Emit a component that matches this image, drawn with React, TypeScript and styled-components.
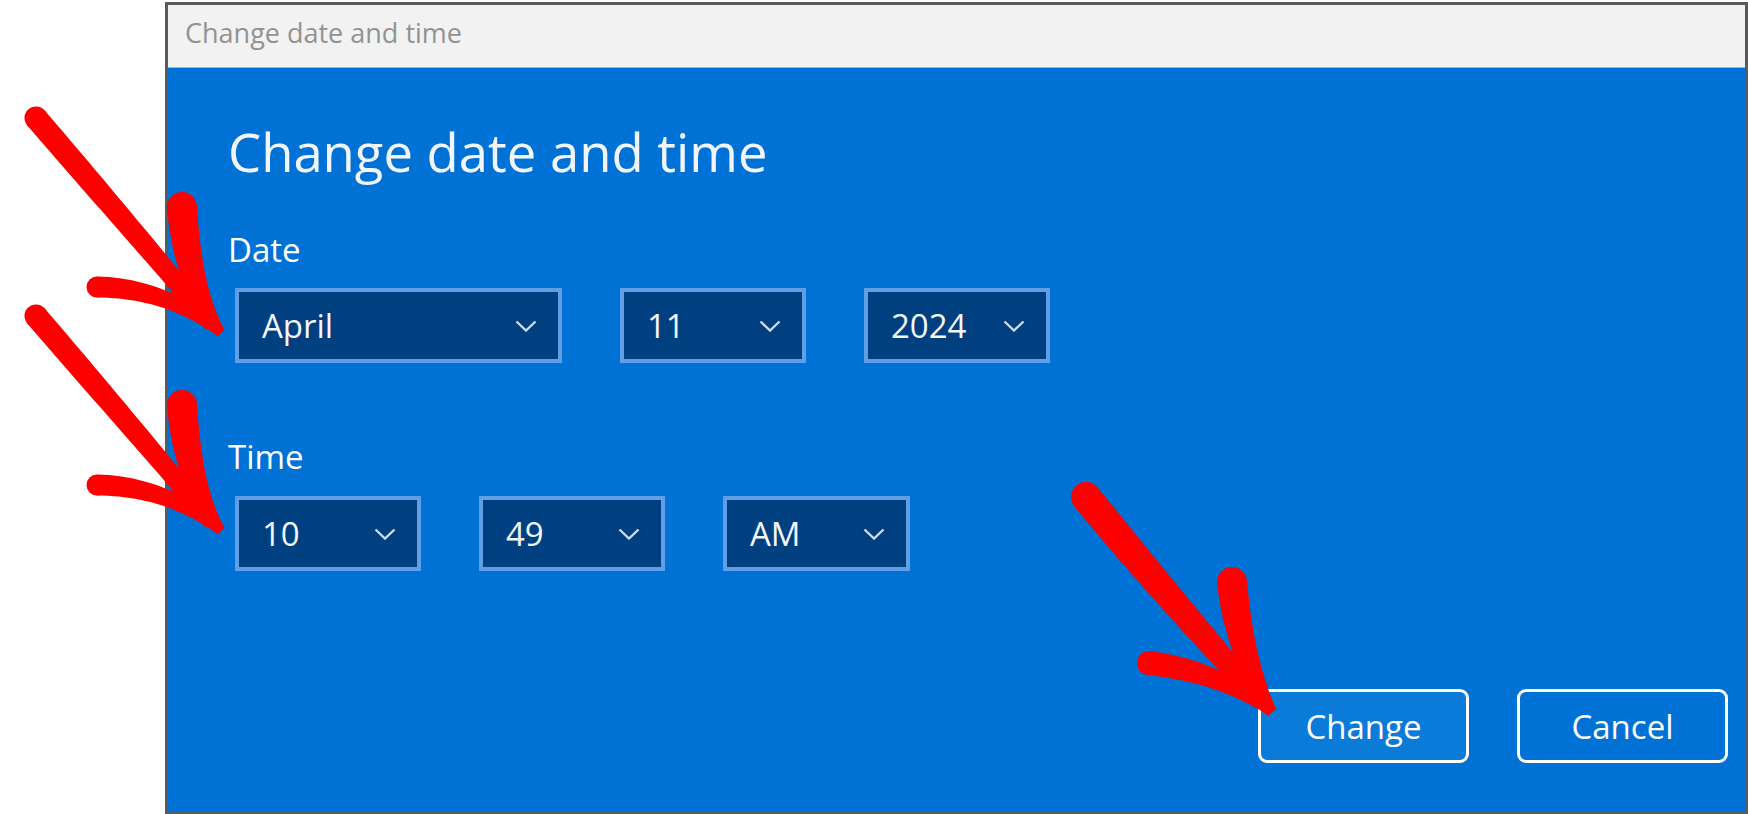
import React from "react";
import styled, { createGlobalStyle } from "styled-components";

type Pt = [number, number];
type Stroke = [Pt, Pt, Pt, number, number];

const GlobalStyle = createGlobalStyle`
  body {
    margin: 0;
    background: #ffffff;
    font-family: "Open Sans", "Noto Sans", sans-serif;
    overflow: hidden;
  }
`;

// sample a quadratic curve and turn it into a tapered brush stroke
const brush = (p0: Pt, p1: Pt, p2: Pt, w0: number, w1: number) => {
  const n = 24;
  const pts: Pt[] = [];
  for (let i = 0; i <= n; i++) {
    const t = i / n;
    const a = (1 - t) * (1 - t);
    const b = 2 * (1 - t) * t;
    const c = t * t;
    pts.push([a * p0[0] + b * p1[0] + c * p2[0], a * p0[1] + b * p1[1] + c * p2[1]]);
  }
  const left: Pt[] = [];
  const right: Pt[] = [];
  pts.forEach((p, i) => {
    const prev = pts[Math.max(0, i - 1)];
    const next = pts[Math.min(n, i + 1)];
    const dx = next[0] - prev[0];
    const dy = next[1] - prev[1];
    const len = Math.hypot(dx, dy) || 1;
    const w = (w0 + (w1 - w0) * Math.pow(i / n, 1.6)) / 2;
    left.push([p[0] - (dy / len) * w, p[1] + (dx / len) * w]);
    right.push([p[0] + (dy / len) * w, p[1] - (dx / len) * w]);
  });
  const f = (p: Pt) => `${p[0].toFixed(1)} ${p[1].toFixed(1)}`;
  return (
    "M " +
    left.map(f).join(" L ") +
    " L " +
    right.reverse().map(f).join(" L ") +
    " Z"
  );
};

const Arrow = ({ shaft, upper, lower, fill }: { shaft: Stroke; upper: Stroke; lower: Stroke; fill: Pt[] }) => (
  <g fill="#fd0000">
    <polygon points={fill.map((p) => p.join(",")).join(" ")} />
    {[shaft, upper, lower].map((s, i) => (
      <React.Fragment key={i}>
        <path d={brush(s[0], s[1], s[2], s[3], s[4])} />
        <circle cx={s[0][0]} cy={s[0][1]} r={s[3] / 2} />
      </React.Fragment>
    ))}
  </g>
);

const LeftArrow = ({ dy }: { dy: number }) => (
  <g transform={`translate(0 ${dy})`}>
    <Arrow
      shaft={[[36, 118], [124, 220], [212, 324], 23, 17]}
      upper={[[182, 207], [188, 290], [221, 333], 30, 9]}
      lower={[[97, 287], [168, 288], [221, 333], 21, 9]}
      fill={[[195, 275], [221, 333], [160, 300]]}
    />
  </g>
);

const Chevron = () => (
  <svg width="22" height="12" viewBox="0 0 22 12">
    <polyline points="1.5,1.5 11,10.5 20.5,1.5" fill="none" stroke="#cfdaec" strokeWidth="2.4" />
  </svg>
);

const Select = ({ value, width }: { value: string; width: number }) => (
  <Box $width={width}>
    <span>{value}</span>
    <Chevron />
  </Box>
);

const App = () => (
  <>
    <GlobalStyle />
    <Page>
      <Window>
        <TitleBar>Change date and time</TitleBar>
        <Content>
          <Heading>Change date and time</Heading>
          <Label $top={55}>Date</Label>
          <Row $top={22}>
            <Select value="April" width={327} />
            <Select value="11" width={186} />
            <Select value="2024" width={186} />
          </Row>
          <Label $top={77}>Time</Label>
          <Row $top={23}>
            <Select value="10" width={186} />
            <Select value="49" width={186} />
            <Select value="AM" width={187} />
          </Row>
          <Buttons>
            <Button $primary>Change</Button>
            <Button>Cancel</Button>
          </Buttons>
        </Content>
      </Window>
      <Marks width="1748" height="814" viewBox="0 0 1748 814">
        <LeftArrow dy={0} />
        <LeftArrow dy={198} />
        <Arrow
          shaft={[[1086, 497], [1172, 602], [1262, 702], 30, 19]}
          upper={[[1232, 582], [1240, 660], [1272, 712], 30, 10]}
          lower={[[1149, 663], [1222, 672], [1272, 712], 24, 10]}
          fill={[[1250, 655], [1272, 712], [1205, 680]]}
        />
      </Marks>
    </Page>
  </>
);

const Page = styled.div`
  position: relative;
  width: 1748px;
  height: 814px;
  padding-top: 2px;
  box-sizing: border-box;
`;

const Window = styled.div`
  margin-left: 165px;
  width: 1583px;
  height: 812px;
  box-sizing: border-box;
  border: 3px solid #5a5a5a;
  display: flex;
  flex-direction: column;
`;

const TitleBar = styled.div`
  height: 63px;
  box-sizing: border-box;
  padding: 14px 0 0 17px;
  background: #f2f2f2;
  border-bottom: 1px solid #8dbbe9;
  color: #929292;
  font-size: 27px;
  line-height: 27px;
`;

const Content = styled.div`
  flex: 1;
  background: #0072d6;
  display: flex;
  flex-direction: column;
  padding: 57px 17px 48px 60px;
  color: #ffffff;
`;

const Heading = styled.h1`
  margin: 0;
  font-size: 52.6px;
  line-height: 53px;
  font-weight: 400;
  color: #f2f6fc;
`;

const Label = styled.div<{ $top: number }>`
  margin-top: ${(p) => p.$top}px;
  font-size: 33px;
  line-height: 33px;
`;

const Row = styled.div<{ $top: number }>`
  display: flex;
  gap: 58px;
  margin: ${(p) => p.$top}px 0 0 7px;
`;

const Box = styled.div<{ $width: number }>`
  width: ${(p) => p.$width}px;
  height: 75px;
  box-sizing: border-box;
  border: 4px solid #5f9fe6;
  background: #003f80;
  display: flex;
  align-items: center;
  justify-content: space-between;
  padding: 0 21px 0 23px;
  font-size: 33px;
  line-height: 33px;
  color: #f4f7fb;
`;

const Buttons = styled.div`
  margin-top: auto;
  display: flex;
  justify-content: flex-end;
  gap: 48px;
`;

const Button = styled.button<{ $primary?: boolean }>`
  width: 211px;
  height: 74px;
  box-sizing: border-box;
  border: 3px solid #ffffff;
  border-radius: 9px;
  background: ${(p) => (p.$primary ? "#0a7bd9" : "#0072d6")};
  color: #ffffff;
  font-family: "Open Sans", "Noto Sans", sans-serif;
  font-size: 33px;
  padding: 0;
`;

const Marks = styled.svg`
  position: absolute;
  left: 0;
  top: 0;
  pointer-events: none;
`;

export default App;
